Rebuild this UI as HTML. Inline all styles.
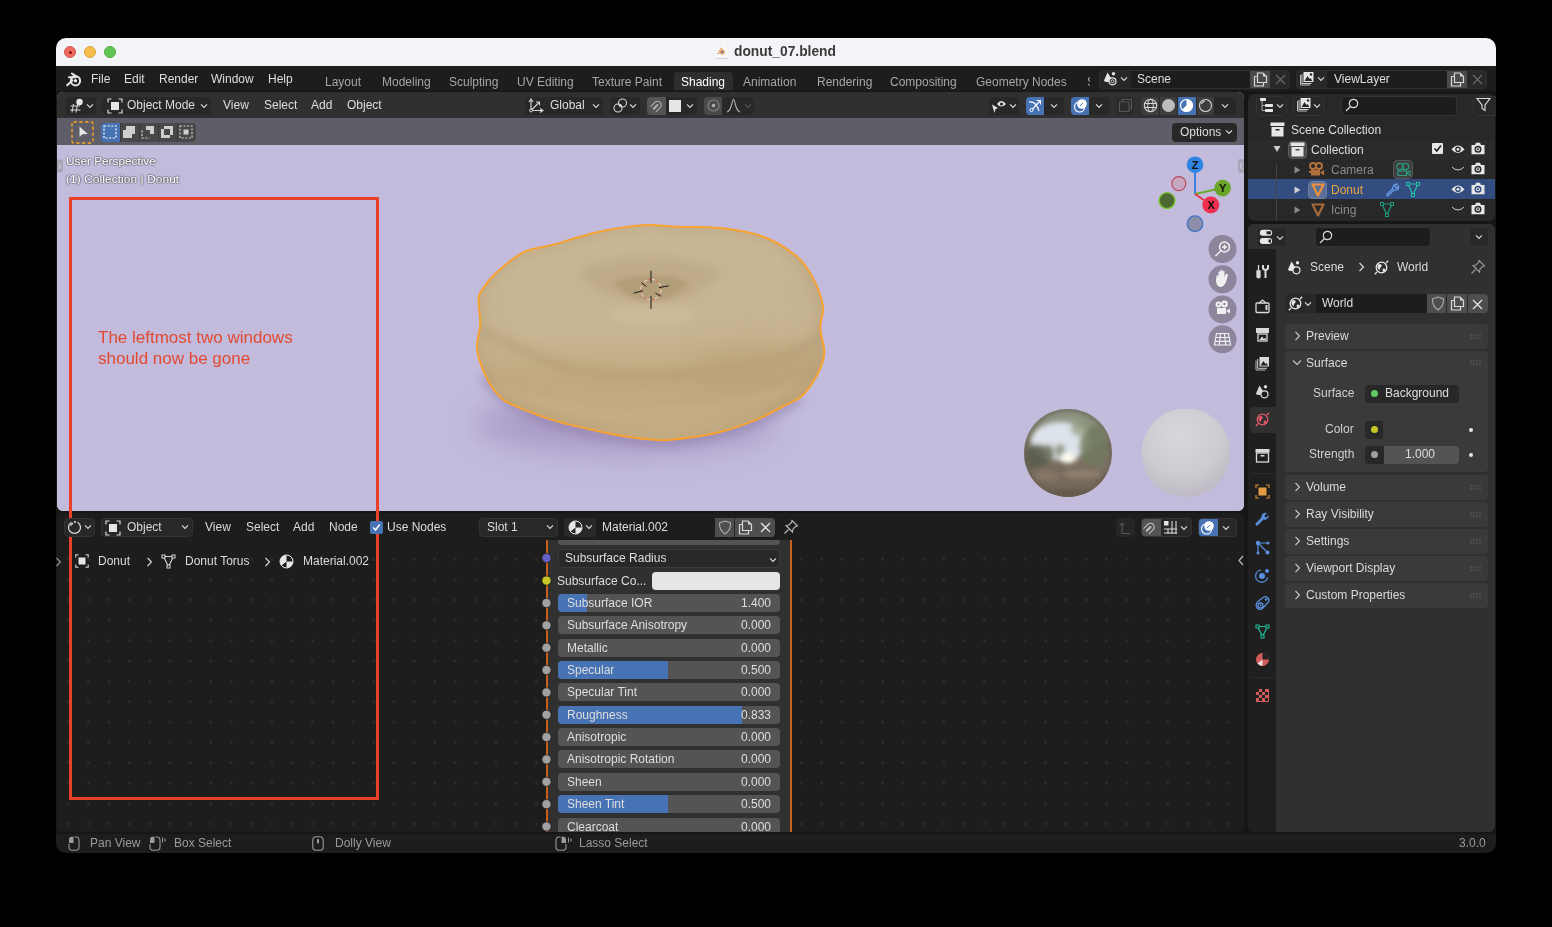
<!DOCTYPE html>
<html><head><meta charset="utf-8"><style>
*{box-sizing:border-box;margin:0;padding:0}
html,body{width:1552px;height:927px;background:#000;overflow:hidden;font-family:"Liberation Sans",sans-serif;font-size:12px;color:#d9d9d9}
#win{position:absolute;left:56px;top:38px;width:1440px;height:815px;border-radius:10px;overflow:hidden;background:#161616}
.a{position:absolute}
.t{position:absolute;white-space:nowrap;line-height:1;-webkit-font-smoothing:antialiased;will-change:transform}
svg{position:absolute;overflow:visible}
#pg{position:absolute;left:-56px;top:-38px;width:1552px;height:927px}

</style></head><body>
<div id="win"><div id="pg">
<!-- title bar -->
<div class="a" style="left:56px;top:38px;width:1440px;height:28px;background:#f2f4f7"></div>
<div class="a" style="left:64px;top:46px;width:12px;height:12px;border-radius:50%;background:#ec6a5e;border:0.5px solid #d65a4f"></div>
<div class="a" style="left:68.5px;top:50.5px;width:3px;height:3px;border-radius:50%;background:#8b1a10"></div>
<div class="a" style="left:84px;top:46px;width:12px;height:12px;border-radius:50%;background:#f4bf4f;border:0.5px solid #dca63d"></div>
<div class="a" style="left:104px;top:46px;width:12px;height:12px;border-radius:50%;background:#61c554;border:0.5px solid #52a843"></div>
<div class="a" style="left:715.5px;top:44.5px;width:12.5px;height:13.5px;background:#f7f7f7;border-radius:1.5px;box-shadow:0 0.5px 1px rgba(0,0,0,0.15)"></div>
<svg style="left:717px;top:47px" width="10" height="9" viewBox="0 0 10 9"><circle cx="5.2" cy="5" r="2.6" fill="#e8a060"/><circle cx="5.2" cy="5" r="1" fill="#4a6ab0"/><path d="M0.5 7 L3 5 M1.5 3.5 L5 3.5 M3 1 L5.5 2.5" stroke="#e8a060" stroke-width="1.2"/></svg>
<div class="t" style="left:734px;top:44.5px;font-size:13.8px;font-weight:bold;color:#3b3b3b">donut_07.blend</div>
<!-- top bar -->
<div class="a" style="left:56px;top:66px;width:1440px;height:25px;background:#1d1d1d"></div>
<!-- viewport area -->
<div class="a" style="left:57px;top:92px;width:1187px;height:419px;border-radius:6px;overflow:hidden;background:#c2bbdc">
  <svg style="left:0;top:53px" width="1187" height="366" viewBox="57 145 1187 366">
    <defs>
      <filter id="blur8" filterUnits="userSpaceOnUse" x="0" y="0" width="1552" height="927"><feGaussianBlur stdDeviation="14"/></filter>
      <filter id="blur4" filterUnits="userSpaceOnUse" x="0" y="0" width="1552" height="927"><feGaussianBlur stdDeviation="5"/></filter>
      <filter id="blur2" filterUnits="userSpaceOnUse" x="0" y="0" width="1552" height="927"><feGaussianBlur stdDeviation="2.5"/></filter>
      <linearGradient id="dg" x1="0" y1="0" x2="0" y2="1">
        <stop offset="0" stop-color="#c8b695"/>
        <stop offset="0.5" stop-color="#c8b592"/>
        <stop offset="0.72" stop-color="#c1a97f"/>
        <stop offset="1" stop-color="#c5ae86"/>
      </linearGradient>
      <radialGradient id="chrome" cx="0.45" cy="0.35" r="0.65">
        <stop offset="0" stop-color="#f4f4f0"/>
        <stop offset="0.3" stop-color="#c8cbc4"/>
        <stop offset="0.6" stop-color="#7a7d70"/>
        <stop offset="0.85" stop-color="#5a5548"/>
        <stop offset="1" stop-color="#3e3a32"/>
      </radialGradient>
      <radialGradient id="white" cx="0.45" cy="0.3" r="0.75">
        <stop offset="0" stop-color="#d6d7dc"/>
        <stop offset="0.6" stop-color="#cdcbd1"/>
        <stop offset="1" stop-color="#bbb6c1"/>
      </radialGradient>
      <clipPath id="dclip"><path id="dpath" d="M642.0 225.3 C655.6 224.4 665.4 226.2 678.5 226.7 C691.6 227.2 706.6 226.5 720.6 228.1 C734.6 229.7 750.1 231.8 762.7 236.5 C775.3 241.2 787.9 249.1 796.3 256.1 C804.7 263.1 808.8 270.2 813.2 278.6 C817.7 287.0 821.8 298.4 823.0 306.6 C824.2 314.8 820.0 320.3 820.2 328.0 C820.4 335.7 824.7 345.3 824.3 352.9 C823.9 360.5 821.4 366.4 817.8 373.5 C814.1 380.6 808.4 389.8 802.4 395.4 C796.4 401.0 789.5 402.9 781.8 407.0 C774.1 411.1 766.8 415.6 756.0 419.9 C745.2 424.2 731.9 429.5 717.3 432.8 C702.7 436.1 681.3 438.9 668.4 439.9 C655.5 440.8 650.5 439.7 640.0 438.5 C629.5 437.3 619.4 435.6 605.6 432.7 C591.8 429.8 572.5 426.0 557.1 421.4 C541.7 416.8 523.4 409.8 513.4 405.2 C503.4 400.6 502.0 399.3 497.2 393.9 C492.4 388.5 487.7 380.4 484.3 372.8 C480.9 365.2 477.7 356.6 477.0 348.5 C476.3 340.4 479.9 332.4 480.2 324.3 C480.5 316.2 478.3 305.8 478.6 300.0 C478.9 294.2 479.2 294.3 482.1 289.8 C485.0 285.3 489.1 279.3 496.1 273.0 C503.1 266.7 514.9 256.6 524.2 251.9 C533.6 247.2 540.1 248.2 552.2 244.9 C564.4 241.6 582.1 235.6 597.1 232.3 C612.1 229.0 628.4 226.2 642.0 225.3 Z"/></clipPath>
    </defs>
    <rect x="57" y="145" width="1187" height="366" fill="#c2bbdc"/>
    <ellipse cx="625" cy="424" rx="150" ry="30" fill="#a393c2" filter="url(#blur8)" opacity="0.75"/>
    <path d="M484 375 Q500 405 557 424 Q620 442 668 442 Q740 436 800 398" fill="none" stroke="#8f7fa8" stroke-width="10" filter="url(#blur4)" opacity="0.6"/>
    <g clip-path="url(#dclip)">
      <rect x="470" y="220" width="360" height="225" fill="url(#dg)"/>
      <path d="M478 300 Q470 360 500 400" fill="none" stroke="#b9a583" stroke-width="14" filter="url(#blur8)" opacity="0.3"/>
      <path d="M578 270 Q650 246 722 270 Q700 302 651 304 Q600 302 578 270 Z" fill="#b39f7b" filter="url(#blur4)" opacity="0.45"/>
      <path d="M612 282 Q651 268 690 282 Q675 300 651 301 Q627 300 612 282 Z" fill="#a8936d" filter="url(#blur2)" opacity="0.55"/>
      <ellipse cx="652" cy="314" rx="45" ry="9" fill="#cfbd9c" filter="url(#blur4)" opacity="0.7"/>
      <path d="M481 330 Q530 356 573 370 Q640 380 700 372 Q770 366 808 346 L824 335" fill="none" stroke="#b09870" stroke-width="7" filter="url(#blur4)" opacity="0.6"/>
      <ellipse cx="760" cy="370" rx="70" ry="28" fill="#b9a176" filter="url(#blur8)" opacity="0.55"/>
      <path d="M484 385 Q600 425 660 412 Q740 410 815 380" fill="none" stroke="#cbb48b" stroke-width="9" filter="url(#blur4)" opacity="0.4"/>
      <use href="#dpath" fill="none" stroke="#a8916c" stroke-width="8" filter="url(#blur4)" opacity="0.25"/>
      <path d="M808 262 Q838 330 808 400" fill="none" stroke="#ae976e" stroke-width="10" filter="url(#blur8)" opacity="0.4"/>
    </g>
    <use href="#dpath" fill="none" stroke="#f7a231" stroke-width="2"/>
    <!-- 3d cursor -->
    <circle cx="651" cy="289.5" r="10.2" fill="none" stroke="#e8e0d8" stroke-width="1" stroke-dasharray="4 4"/>
    <circle cx="651" cy="289.5" r="10.2" fill="none" stroke="#d86a50" stroke-width="1" stroke-dasharray="4 4" stroke-dashoffset="4"/>
    <path d="M651 270.7 L651 283 M651 296 L651 309 M633.6 293.2 L643 290.7 M659 287.6 L668.7 285.8 M641.5 282.8 L646.5 286.5 M655.5 293 L660.8 296.2" stroke="#1a1a1a" stroke-width="1"/>
    <!-- spheres -->
    <clipPath id="sclip"><circle cx="1068" cy="452.9" r="44"/></clipPath>
    <g clip-path="url(#sclip)">
      <rect x="1020" y="405" width="96" height="96" fill="#80776a"/>
      <ellipse cx="1068" cy="428" rx="46" ry="24" fill="#8f9684" filter="url(#blur2)"/>
      <ellipse cx="1061" cy="441" rx="30" ry="19" fill="#dde3ea" filter="url(#blur2)"/>
      <ellipse cx="1094" cy="447" rx="14" ry="22" fill="#6f785c" filter="url(#blur2)" opacity="0.85"/>
      <ellipse cx="1080" cy="428" rx="9" ry="8" fill="#8c9878" filter="url(#blur2)" opacity="0.7"/>
      <ellipse cx="1037" cy="458" rx="13" ry="13" fill="#5a5b4e" filter="url(#blur2)" opacity="0.9"/>
      <ellipse cx="1048" cy="453" rx="6" ry="8" fill="#6e735e" filter="url(#blur2)" opacity="0.8"/>
      <ellipse cx="1060" cy="451" rx="5" ry="7" fill="#7b8167" filter="url(#blur2)" opacity="0.7"/>
      <ellipse cx="1068" cy="486" rx="50" ry="23" fill="#776a5b" filter="url(#blur2)"/>
      <ellipse cx="1082" cy="474" rx="20" ry="5" fill="#978876" filter="url(#blur2)" opacity="0.7"/>
      <ellipse cx="1046" cy="476" rx="14" ry="6" fill="#8b7c69" filter="url(#blur2)" opacity="0.7"/>
      <ellipse cx="1068" cy="497" rx="40" ry="8" fill="#5f5447" filter="url(#blur2)" opacity="0.8"/>
      <ellipse cx="1068" cy="458" rx="8" ry="5" fill="#fffdf2" filter="url(#blur2)"/>
      <circle cx="1068" cy="452.9" r="44" fill="none" stroke="#665d50" stroke-width="5" filter="url(#blur2)" opacity="0.75"/>
    </g>
    <circle cx="1186" cy="452.8" r="44.3" fill="url(#white)"/>
    <!-- gizmo -->
    <path d="M1195 194 L1195 165" stroke="#3b82e0" stroke-width="2"/>
    <path d="M1195 194 L1222.5 188" stroke="#6aaa2a" stroke-width="2"/>
    <path d="M1195 194 L1211 205" stroke="#e8334d" stroke-width="2"/>
    <circle cx="1178.8" cy="183.6" r="7" fill="#c6a7c2" stroke="#b94a5a" stroke-width="1.2"/>
    <circle cx="1167" cy="200.6" r="8" fill="#4e6834" stroke="#7fc634" stroke-width="1.4"/>
    <circle cx="1195" cy="223.7" r="7.8" fill="#8d8ca9" stroke="#3e76c8" stroke-width="1.3"/>
    <circle cx="1195" cy="164.7" r="8.3" fill="#2f86e2"/>
    <circle cx="1222.6" cy="188.1" r="8.3" fill="#6aa52a"/>
    <circle cx="1210.8" cy="205.1" r="8.5" fill="#ee2f4f"/>
    <text x="1195" y="168.8" font-family="Liberation Sans" font-size="11" font-weight="bold" fill="#101010" text-anchor="middle">Z</text>
    <text x="1222.6" y="192.2" font-family="Liberation Sans" font-size="11" font-weight="bold" fill="#101010" text-anchor="middle">Y</text>
    <text x="1210.8" y="209.2" font-family="Liberation Sans" font-size="11" font-weight="bold" fill="#101010" text-anchor="middle">X</text>
    <!-- nav buttons -->
    <circle cx="1222.5" cy="249.1" r="14" fill="#8c859c"/>
    <circle cx="1222.5" cy="279.3" r="14" fill="#8c859c"/>
    <circle cx="1222.5" cy="309.4" r="14" fill="#8c859c"/>
    <circle cx="1222.5" cy="339.3" r="14" fill="#8c859c"/>
    <circle cx="1224.5" cy="247" r="5" fill="none" stroke="#f0f0f0" stroke-width="1.5"/>
    <path d="M1221 250.5 L1215.5 256 M1224.5 244.5 L1224.5 249.5 M1222 247 L1227 247" stroke="#f0f0f0" stroke-width="1.5"/>
    <path d="M1216 280 L1216.5 276 Q1217.5 274.5 1218.5 276 L1218.5 278 L1218.5 272 Q1219.5 270.5 1220.5 272 L1220.5 277 L1220.5 270.5 Q1221.5 269 1222.5 270.5 L1222.5 277 L1222.5 271.5 Q1223.5 270 1224.5 271.5 L1224.5 277.5 L1225.5 274.5 Q1227 273 1228 275 L1226 282 Q1224 287 1220 287 Q1216 286 1216 280 Z" fill="#f0f0f0"/>
    <circle cx="1218.5" cy="304.5" r="3" fill="#f0f0f0"/><circle cx="1224.5" cy="304" r="3.4" fill="#f0f0f0"/>
    <circle cx="1218.5" cy="304.5" r="1" fill="#8c859c"/><circle cx="1224.5" cy="304" r="1.2" fill="#8c859c"/>
    <rect x="1217" y="308" width="9" height="6" fill="#f0f0f0"/><path d="M1226 311 L1230 308.5 L1230 313.5 Z" fill="#f0f0f0"/>
    <path d="M1216.5 333.5 L1228.5 333.5 L1230.5 345 L1214.5 345 Z M1215.5 337.5 L1229.5 337.5 M1215 341.3 L1230 341.3 M1220.5 333.5 L1219.2 345 M1224.5 333.5 L1225.8 345" fill="none" stroke="#f0f0f0" stroke-width="1.2"/>
    <!-- side tabs -->
    <rect x="55" y="159.5" width="8" height="13" rx="2" fill="#a9a3b6"/><path d="M58.5 163 L61 166 L58.5 169" fill="none" stroke="#d8d4e0" stroke-width="1"/>
    <rect x="1238" y="159" width="9" height="14" rx="2" fill="#aaa4b8"/><path d="M1242.5 163 L1240 166 L1242.5 169" fill="none" stroke="#d8d4e0" stroke-width="1"/>
  </svg>
  <div class="a" style="left:0;top:0;width:1187px;height:26px;background:#303030"></div>
  <div class="a" style="left:0;top:26px;width:1187px;height:27px;background:#5f5d68"></div>
</div>
<!-- node editor area -->
<div class="a" style="left:57px;top:513px;width:1187px;height:318.5px;border-radius:6px;overflow:hidden;background-color:#1d1d1d;background-image:radial-gradient(circle at 10.185px 10.185px,#2a2a2a 0,#2a2a2a 1.4px,transparent 1.8px);background-size:20.37px 20.37px;background-position:1.05px -4.7px">
  <div class="a" style="left:0;top:0;width:1187px;height:27px;background:#1d1d1d"></div>
</div>
<!-- outliner -->
<div class="a" style="left:1248px;top:93.5px;width:247px;height:127px;border-radius:6px;overflow:hidden;background:#282828"></div>
<!-- properties -->
<div class="a" style="left:1248px;top:224px;width:247px;height:607.5px;border-radius:6px;overflow:hidden;background:#303030">
  <div class="a" style="left:0;top:0;width:247px;height:25px;background:#303030"></div>
  <div class="a" style="left:0;top:25px;width:28px;height:583px;background:#1f1f1f"></div>
</div>
<!-- status bar -->
<div class="a" style="left:56px;top:833.5px;width:1440px;height:20px;background:#1d1d1d"></div>
<!-- blender logo -->
<svg style="left:66px;top:72px" width="16" height="15" viewBox="0 0 16 15">
  <circle cx="9.5" cy="8.8" r="4.6" fill="none" stroke="#e6e6e6" stroke-width="2"/>
  <circle cx="9.5" cy="8.8" r="1.7" fill="#e6e6e6"/>
  <path d="M1.2 13.2 L6.5 8.2 M3 5.2 L9.5 5.2 M6 1.6 L10.5 4.6" stroke="#e6e6e6" stroke-width="2" stroke-linecap="round" fill="none"/>
</svg>
<div class="t" style="left:91px;top:73px;color:#dedede">File</div>
<div class="t" style="left:124px;top:73px;color:#dedede">Edit</div>
<div class="t" style="left:159px;top:73px;color:#dedede">Render</div>
<div class="t" style="left:211px;top:73px;color:#dedede">Window</div>
<div class="t" style="left:268px;top:73px;color:#dedede">Help</div>
<!-- workspace tabs -->
<div class="a" style="left:674px;top:72px;width:59px;height:18px;border-radius:4px 4px 0 0;background:#2e2e2e"></div>
<div class="t" style="left:325px;top:76px;color:#a6a6a6">Layout</div>
<div class="t" style="left:382px;top:76px;color:#a6a6a6">Modeling</div>
<div class="t" style="left:449px;top:76px;color:#a6a6a6">Sculpting</div>
<div class="t" style="left:517px;top:76px;color:#a6a6a6">UV Editing</div>
<div class="t" style="left:592px;top:76px;color:#a6a6a6">Texture Paint</div>
<div class="t" style="left:681px;top:76px;color:#ffffff">Shading</div>
<div class="t" style="left:743px;top:76px;color:#a6a6a6">Animation</div>
<div class="t" style="left:817px;top:76px;color:#a6a6a6">Rendering</div>
<div class="t" style="left:890px;top:76px;color:#a6a6a6">Compositing</div>
<div class="t" style="left:976px;top:76px;color:#a6a6a6">Geometry Nodes</div>
<div class="a" style="left:1087px;top:76px;width:3px;height:11px;overflow:hidden"><div class="t" style="left:0;top:0;color:#a6a6a6">S</div></div>
<!-- scene selector -->
<div class="a" style="left:1099px;top:69.5px;width:191px;height:19.5px;border-radius:4px;background:#282828;border:1px solid #2f2f2f;overflow:hidden">
  <div class="a" style="left:31px;top:0;width:119px;height:18px;background:#1d1d1d"></div>
  <div class="a" style="left:150px;top:0;width:20px;height:18px;background:#4a4a4a"></div>
</div>
<svg style="left:1103px;top:71px" width="16" height="16" viewBox="0 0 16 16">
  <path d="M4.5 1.5 L1 9.5 Q1.5 11 4 11 L6 11 Q6 8 8 7 Z" fill="#e6e6e6"/>
  <circle cx="10.5" cy="2.7" r="1.7" fill="#e6e6e6"/>
  <circle cx="9.5" cy="10.3" r="3.5" fill="#282828" stroke="#e6e6e6" stroke-width="1.2"/>
  <circle cx="9.5" cy="10.3" r="1.5" fill="none" stroke="#e6e6e6" stroke-width="0.9"/>
</svg>
<svg style="left:1120px;top:76px" width="8" height="6" viewBox="0 0 8 6"><path d="M1 1.3 L4 4.3 L7 1.3" stroke="#d9d9d9" stroke-width="1.2" fill="none"/></svg>
<div class="t" style="left:1137px;top:73px;color:#dedede">Scene</div>
<svg style="left:1252.5px;top:71.5px" width="15" height="15" viewBox="0 0 15 15"><path d="M4.5 4 L4.5 1 L10 1 L13.5 4.5 L13.5 10.5 L10.5 10.5" stroke="#d9d9d9" stroke-width="1.2" fill="none"/><path d="M10 1 L13.5 4.5 L10 4.5 Z" fill="#d9d9d9"/><path d="M1.5 4.5 L1.5 14 L10.5 14 L10.5 10.5 M1.5 4.5 L4.5 4.5 M4.5 4.5 L4.5 10.5 L10.5 10.5" stroke="#d9d9d9" stroke-width="1.2" fill="none"/></svg>
<svg style="left:1275px;top:74px" width="11" height="11" viewBox="0 0 11 11"><path d="M1 1 L10 10 M10 1 L1 10" stroke="#6b6b6b" stroke-width="1.1"/></svg>
<!-- view layer selector -->
<div class="a" style="left:1296px;top:69.5px;width:191px;height:19.5px;border-radius:4px;background:#282828;border:1px solid #2f2f2f;overflow:hidden">
  <div class="a" style="left:30px;top:0;width:120px;height:18px;background:#1d1d1d"></div>
  <div class="a" style="left:150px;top:0;width:20px;height:18px;background:#4a4a4a"></div>
</div>
<svg style="left:1299px;top:71px" width="16" height="16" viewBox="0 0 16 16">
  <path d="M1.5 4 L1.5 14 L11 14" stroke="#bdbdbd" stroke-width="1" fill="none"/>
  <path d="M3 3 L3 12.5 L12.5 12.5" stroke="#d0d0d0" stroke-width="1" fill="none"/>
  <rect x="4.5" y="1" width="10" height="10" fill="#e6e6e6"/>
  <path d="M5.5 10 L8.5 5 L10.5 8 L11.5 7 L13.5 10 Z" fill="#282828"/>
  <circle cx="12" cy="3.5" r="1.2" fill="#282828"/>
</svg>
<svg style="left:1317px;top:76px" width="8" height="6" viewBox="0 0 8 6"><path d="M1 1.3 L4 4.3 L7 1.3" stroke="#d9d9d9" stroke-width="1.2" fill="none"/></svg>
<div class="t" style="left:1334px;top:73px;color:#dedede">ViewLayer</div>
<svg style="left:1449.5px;top:71.5px" width="15" height="15" viewBox="0 0 15 15"><path d="M4.5 4 L4.5 1 L10 1 L13.5 4.5 L13.5 10.5 L10.5 10.5" stroke="#d9d9d9" stroke-width="1.2" fill="none"/><path d="M10 1 L13.5 4.5 L10 4.5 Z" fill="#d9d9d9"/><path d="M1.5 4.5 L1.5 14 L10.5 14 L10.5 10.5 M1.5 4.5 L4.5 4.5 M4.5 4.5 L4.5 10.5 L10.5 10.5" stroke="#d9d9d9" stroke-width="1.2" fill="none"/></svg>
<svg style="left:1472px;top:74px" width="11" height="11" viewBox="0 0 11 11"><path d="M1 1 L10 10 M10 1 L1 10" stroke="#6b6b6b" stroke-width="1.1"/></svg>
<!-- viewport header widgets -->
<div class="a" style="left:65.5px;top:96.5px;width:30px;height:18px;border-radius:4px;background:#282828"></div>
<svg style="left:69px;top:98px" width="16" height="15" viewBox="0 0 16 15">
  <path d="M1.5 8 L11 8 M1 12 L11.5 12 M4.5 6 L3 14.5 M8.5 6 L7 14.5" stroke="#cfcfcf" stroke-width="1.1" fill="none"/>
  <circle cx="10.5" cy="4" r="3.2" fill="#e6e6e6"/>
</svg>
<svg style="left:86px;top:103px" width="8" height="6" viewBox="0 0 8 6"><path d="M1 1.3 L4 4.3 L7 1.3" stroke="#d9d9d9" stroke-width="1.2" fill="none"/></svg>
<div class="a" style="left:102px;top:96.5px;width:108.5px;height:18px;border-radius:4px;background:#282828"></div>
<svg style="left:107px;top:97.5px" width="16" height="16" viewBox="0 0 16 16">
  <path d="M1 4.5 L1 1 L4.5 1 M11.5 1 L15 1 L15 4.5 M15 11.5 L15 15 L11.5 15 M4.5 15 L1 15 L1 11.5" stroke="#d9d9d9" stroke-width="1.2" fill="none"/>
  <rect x="4" y="4" width="8" height="8" fill="#e6e6e6"/>
</svg>
<div class="t" style="left:127px;top:99px;color:#dedede">Object Mode</div>
<svg style="left:200px;top:103px" width="8" height="6" viewBox="0 0 8 6"><path d="M1 1.3 L4 4.3 L7 1.3" stroke="#d9d9d9" stroke-width="1.2" fill="none"/></svg>
<div class="t" style="left:223px;top:99px;color:#dedede">View</div>
<div class="t" style="left:264px;top:99px;color:#dedede">Select</div>
<div class="t" style="left:311px;top:99px;color:#dedede">Add</div>
<div class="t" style="left:347px;top:99px;color:#dedede">Object</div>

<!-- transform orientation -->
<div class="a" style="left:525px;top:96.5px;width:78px;height:18px;border-radius:4px;background:#282828"></div>
<svg style="left:529px;top:98px" width="15" height="15" viewBox="0 0 15 15">
  <path d="M2 2 L2 12.5 L13.5 12.5 M2 12.5 L10 4.5" stroke="#d9d9d9" stroke-width="1.1" fill="none"/>
  <path d="M0 4 L2 1 L4 4 M11 10.5 L14 12.5 L11 14.5 M7 4 L10.5 4 L10.5 7.5" stroke="#d9d9d9" stroke-width="1.1" fill="none"/>
  <circle cx="2" cy="12.5" r="1.4" fill="#282828" stroke="#d9d9d9" stroke-width="1"/>
</svg>
<div class="t" style="left:550px;top:99px;color:#dedede">Global</div>
<svg style="left:592px;top:103px" width="8" height="6" viewBox="0 0 8 6"><path d="M1 1.3 L4 4.3 L7 1.3" stroke="#d9d9d9" stroke-width="1.2" fill="none"/></svg>
<div class="a" style="left:610px;top:96.5px;width:30px;height:18px;border-radius:4px;background:#282828"></div>
<svg style="left:613px;top:98px" width="15" height="15" viewBox="0 0 15 15">
  <circle cx="9.5" cy="5" r="4" fill="none" stroke="#d9d9d9" stroke-width="1.1"/>
  <circle cx="5" cy="10" r="4" fill="none" stroke="#d9d9d9" stroke-width="1.1"/>
  <circle cx="7.3" cy="7.5" r="1.2" fill="#e6e6e6"/>
</svg>
<svg style="left:629px;top:103px" width="8" height="6" viewBox="0 0 8 6"><path d="M1 1.3 L4 4.3 L7 1.3" stroke="#d9d9d9" stroke-width="1.2" fill="none"/></svg>
<!-- snap -->
<div class="a" style="left:647px;top:96.5px;width:50px;height:18px;border-radius:4px;background:#282828;overflow:hidden"><div class="a" style="left:0;top:0;width:19px;height:18px;background:#545454"></div></div>
<svg style="left:649px;top:98px" width="15" height="15" viewBox="0 0 15 15"><path d="M2.5 10 L7 5.5 A2.12 2.12 0 0 1 10 8.5 L5.5 13" fill="none" stroke="#b0b0b0" stroke-width="4.4"/><path d="M2.5 10 L7 5.5 A2.12 2.12 0 0 1 10 8.5 L5.5 13" fill="none" stroke="#545454" stroke-width="2.2"/><path d="M1.5 9 L3.5 11 M4.5 12 L6.5 14" stroke="#545454" stroke-width="1.2"/></svg>
<div class="a" style="left:669px;top:99.5px;width:12px;height:12px;background:#e6e6e6"></div>
<svg style="left:686px;top:103px" width="8" height="6" viewBox="0 0 8 6"><path d="M1 1.3 L4 4.3 L7 1.3" stroke="#d9d9d9" stroke-width="1.2" fill="none"/></svg>
<!-- proportional -->
<div class="a" style="left:704px;top:96.5px;width:50px;height:18px;border-radius:4px;background:#282828;overflow:hidden"><div class="a" style="left:0;top:0;width:18px;height:18px;background:#4a4a4a"></div></div>
<svg style="left:705.5px;top:98px" width="15" height="15" viewBox="0 0 15 15"><circle cx="7.5" cy="7.5" r="5.5" fill="none" stroke="#8a8a8a" stroke-width="1.1"/><circle cx="7.5" cy="7.5" r="1.8" fill="#b0b0b0"/></svg>
<svg style="left:726px;top:98px" width="15" height="15" viewBox="0 0 15 15"><path d="M1 14 Q4 13 5.5 7 Q7 1 7.5 1 Q8 1 9.5 7 Q11 13 14 14" fill="none" stroke="#b0b0b0" stroke-width="1.1"/></svg>
<svg style="left:744px;top:103px" width="8" height="6" viewBox="0 0 8 6"><path d="M1 1.3 L4 4.3 L7 1.3" stroke="#555" stroke-width="1.2" fill="none"/></svg>

<!-- right header -->
<div class="a" style="left:989px;top:96.5px;width:30px;height:18px;border-radius:4px;background:#282828"></div>
<svg style="left:991px;top:97.5px" width="16" height="16" viewBox="0 0 16 16">
  <path d="M6 6 Q10 0 15 6 Q10 11 6 6 Z" fill="#e6e6e6"/><circle cx="10.5" cy="6" r="1.6" fill="#282828"/>
  <path d="M1 6.5 L7 10 L4.5 11 L3.5 15 Z" fill="#e6e6e6"/>
</svg>
<svg style="left:1009px;top:103px" width="8" height="6" viewBox="0 0 8 6"><path d="M1 1.3 L4 4.3 L7 1.3" stroke="#d9d9d9" stroke-width="1.2" fill="none"/></svg>
<div class="a" style="left:1026px;top:96.5px;width:38px;height:18px;border-radius:4px;background:#282828;overflow:hidden"><div class="a" style="left:0;top:0;width:18px;height:18px;background:#4772b3"></div></div>
<svg style="left:1028px;top:98px" width="15" height="15" viewBox="0 0 15 15">
  <path d="M1 4 Q8 3 11 13" fill="none" stroke="#fff" stroke-width="1.1"/>
  <path d="M4 11.5 L12.5 2.5 M8.5 2.5 L12.5 2.5 L12.5 6.5" fill="none" stroke="#fff" stroke-width="1.1"/>
  <circle cx="3.5" cy="12" r="1.6" fill="#4772b3" stroke="#fff" stroke-width="1"/>
</svg>
<svg style="left:1050px;top:103px" width="8" height="6" viewBox="0 0 8 6"><path d="M1 1.3 L4 4.3 L7 1.3" stroke="#d9d9d9" stroke-width="1.2" fill="none"/></svg>
<div class="a" style="left:1071px;top:96.5px;width:38px;height:18px;border-radius:4px;background:#282828;overflow:hidden"><div class="a" style="left:0;top:0;width:18px;height:18px;background:#4772b3"></div></div>
<svg style="left:1073px;top:98px" width="15" height="15" viewBox="0 0 15 15">
  <path d="M6 4 A5 5 0 1 0 11.5 10" fill="none" stroke="#fff" stroke-width="1.1"/>
  <circle cx="9" cy="6" r="4.8" fill="#fff"/>
  <path d="M7 8 L10 5" stroke="#4772b3" stroke-width="1"/>
</svg>
<svg style="left:1095px;top:103px" width="8" height="6" viewBox="0 0 8 6"><path d="M1 1.3 L4 4.3 L7 1.3" stroke="#d9d9d9" stroke-width="1.2" fill="none"/></svg>
<div class="a" style="left:1116px;top:96.5px;width:18px;height:18px;border-radius:4px;background:#2b2b2b"></div>
<svg style="left:1118px;top:98px" width="15" height="15" viewBox="0 0 15 15"><path d="M4 4 L4 1.5 L13.5 1.5 L13.5 11 L11 11 M1.5 4 L11 4 L11 13.5 L1.5 13.5 Z" fill="none" stroke="#555" stroke-width="1.1"/></svg>
<div class="a" style="left:1141px;top:96.5px;width:95px;height:18px;border-radius:4px;background:#282828;overflow:hidden">
  <div class="a" style="left:0;top:0;width:18px;height:18px;background:#3d3d3d"></div>
  <div class="a" style="left:19px;top:0;width:17px;height:18px;background:#3d3d3d"></div>
  <div class="a" style="left:37px;top:0;width:18px;height:18px;background:#4772b3"></div>
  <div class="a" style="left:56px;top:0;width:17px;height:18px;background:#3d3d3d"></div>
</div>
<svg style="left:1143px;top:98px" width="15" height="15" viewBox="0 0 15 15"><circle cx="7.5" cy="7.5" r="6.2" fill="none" stroke="#d9d9d9" stroke-width="1.1"/><ellipse cx="7.5" cy="7.5" rx="2.8" ry="6.2" fill="none" stroke="#d9d9d9" stroke-width="1"/><path d="M1.3 5.5 L13.7 5.5 M1.3 9.5 L13.7 9.5" stroke="#d9d9d9" stroke-width="1"/></svg>
<svg style="left:1161px;top:98px" width="15" height="15" viewBox="0 0 15 15"><circle cx="7.5" cy="7.5" r="6.5" fill="#bdbdbd"/></svg>
<svg style="left:1179px;top:98px" width="15" height="15" viewBox="0 0 15 15"><circle cx="7.5" cy="7.5" r="6" fill="none" stroke="#fff" stroke-width="1.2"/><path d="M7.5 1.5 L7.5 7.5 L13.5 7.5 A6 6 0 0 0 7.5 1.5 Z M7.5 7.5 L3 11.5 A6 6 0 0 0 13.5 7.5 Z" fill="#fff"/></svg>
<svg style="left:1198px;top:98px" width="15" height="15" viewBox="0 0 15 15"><circle cx="7.5" cy="7.5" r="6" fill="none" stroke="#cfcfcf" stroke-width="1.1"/><path d="M3.5 6 Q4.5 3.5 7 3" fill="none" stroke="#cfcfcf" stroke-width="1.1"/></svg>
<svg style="left:1221px;top:103px" width="8" height="6" viewBox="0 0 8 6"><path d="M1 1.3 L4 4.3 L7 1.3" stroke="#d9d9d9" stroke-width="1.2" fill="none"/></svg>

<!-- tool header -->
<svg style="left:70.5px;top:120.5px" width="23" height="23" viewBox="0 0 23 23"><rect x="1" y="1" width="21" height="21" rx="1.5" fill="none" stroke="#f5a623" stroke-width="1.4" stroke-dasharray="3.4 2.4"/></svg>
<svg style="left:78px;top:126px" width="11" height="12" viewBox="0 0 11 12"><path d="M1.5 0.5 L1.5 11 L4.3 8.3 L9.8 8.1 Z" fill="#e6e6e6"/></svg>
<div class="a" style="left:100.5px;top:122.5px;width:95px;height:19px;border-radius:4px;background:#484848;overflow:hidden">
  <div class="a" style="left:0;top:0;width:19px;height:19px;background:#4772b3"></div>
  <div class="a" style="left:19px;top:0;width:1px;height:19px;background:#3a3a3a"></div>
  <div class="a" style="left:38px;top:0;width:1px;height:19px;background:#3a3a3a"></div>
  <div class="a" style="left:57px;top:0;width:1px;height:19px;background:#3a3a3a"></div>
  <div class="a" style="left:76px;top:0;width:1px;height:19px;background:#3a3a3a"></div>
</div>
<svg style="left:103px;top:125px" width="14" height="14" viewBox="0 0 14 14"><rect x="1" y="1" width="12" height="12" fill="none" stroke="#fff" stroke-width="1.2" stroke-dasharray="2 1.6"/></svg>
<svg style="left:122px;top:125px" width="14" height="14" viewBox="0 0 14 14"><path d="M4 1 L13 1 L13 9 L10 9 L10 13 L1 13 L1 5 L4 5 Z" fill="#cfcfcf"/></svg>
<svg style="left:141px;top:125px" width="14" height="14" viewBox="0 0 14 14"><path d="M5 1 L13 1 L13 9 L9 9 L9 5 L5 5 Z" fill="#cfcfcf"/><path d="M1 5.5 L1 13 L8.5 13" fill="none" stroke="#cfcfcf" stroke-width="1.2" stroke-dasharray="2 1.6"/></svg>
<svg style="left:160px;top:125px" width="14" height="14" viewBox="0 0 14 14"><path d="M1 4 L10 4 L10 13 L1 13 Z M4 1 L13 1 L13 10 L10 10 L10 4 L4 4 Z" fill="#cfcfcf" fill-rule="evenodd"/><rect x="4" y="4" width="6" height="6" fill="#484848"/></svg>
<svg style="left:179px;top:125px" width="14" height="14" viewBox="0 0 14 14"><rect x="1" y="1" width="12" height="12" fill="none" stroke="#cfcfcf" stroke-width="1.2" stroke-dasharray="2 1.6"/><rect x="4.5" y="4.5" width="5" height="5" fill="#cfcfcf"/></svg>
<div class="a" style="left:1172px;top:122.5px;width:65px;height:19px;border-radius:4px;background:#282828"></div>
<div class="t" style="left:1180px;top:126px;color:#dedede">Options</div>
<svg style="left:1225px;top:129px" width="8" height="6" viewBox="0 0 8 6"><path d="M1 1.3 L4 4.3 L7 1.3" stroke="#d9d9d9" stroke-width="1.2" fill="none"/></svg>
<div class="t" style="left:66px;top:155.5px;font-size:11.8px;color:#fff;-webkit-text-stroke:0.2px #fff;text-shadow:0 0 1.5px #000,0 0 1.5px #000">User Perspective</div>
<div class="t" style="left:66px;top:173.5px;font-size:11.8px;color:#fff;letter-spacing:0.12px;-webkit-text-stroke:0.2px #fff;text-shadow:0 0 1.5px #000,0 0 1.5px #000">(1) Collection | Donut</div>
<div class="a" style="left:69px;top:196.5px;width:309.5px;height:603px;border:3px solid #e8402a"></div>
<div class="t" style="left:98px;top:327.5px;font-size:17px;color:#e34a32;line-height:20.6px">The leftmost two windows<br>should now be gone</div>
<!-- outliner header -->
<div class="a" style="left:1256px;top:95.5px;width:31px;height:20px;border-radius:4px;background:#282828;border:1px solid #333"></div>
<svg style="left:1259px;top:97px" width="16" height="16" viewBox="0 0 16 16">
  <rect x="1" y="1" width="6" height="3" rx="0.8" fill="#e6e6e6"/>
  <rect x="6" y="7" width="8" height="3" rx="0.8" fill="#e6e6e6"/>
  <rect x="6" y="12" width="8" height="3" rx="0.8" fill="#e6e6e6"/>
  <path d="M3 4 L3 13.5 L6 13.5 M3 8.5 L6 8.5" stroke="#aaa" stroke-width="1" fill="none"/>
</svg>
<svg style="left:1276px;top:103px" width="8" height="6" viewBox="0 0 8 6"><path d="M1 1.3 L4 4.3 L7 1.3" stroke="#d9d9d9" stroke-width="1.2" fill="none"/></svg>
<div class="a" style="left:1293px;top:95.5px;width:31px;height:20px;border-radius:4px;background:#282828;border:1px solid #333"></div>
<svg style="left:1296px;top:97px" width="16" height="16" viewBox="0 0 16 16">
  <path d="M1.5 4 L1.5 14 L11 14" stroke="#bdbdbd" stroke-width="1" fill="none"/>
  <path d="M3 3 L3 12.5 L12.5 12.5" stroke="#d0d0d0" stroke-width="1" fill="none"/>
  <rect x="4.5" y="1" width="10" height="10" fill="#e6e6e6"/>
  <path d="M5.5 10 L8.5 5 L10.5 8 L11.5 7 L13.5 10 Z" fill="#282828"/>
  <circle cx="12" cy="3.5" r="1.2" fill="#282828"/>
</svg>
<svg style="left:1313px;top:103px" width="8" height="6" viewBox="0 0 8 6"><path d="M1 1.3 L4 4.3 L7 1.3" stroke="#d9d9d9" stroke-width="1.2" fill="none"/></svg>
<div class="a" style="left:1341px;top:95.5px;width:116px;height:20px;border-radius:4px;background:#1d1d1d;border:1px solid #333"></div>
<svg style="left:1345px;top:98px" width="14" height="14" viewBox="0 0 14 14"><circle cx="8.5" cy="5.5" r="4.2" fill="none" stroke="#d9d9d9" stroke-width="1.2"/><path d="M5.5 8.5 L1 13" stroke="#d9d9d9" stroke-width="1.3"/></svg>
<div class="a" style="left:1473px;top:95.5px;width:30px;height:20px;border-radius:4px;background:#282828;border:1px solid #333"></div>
<svg style="left:1476px;top:97px" width="15" height="15" viewBox="0 0 15 15"><path d="M1 1.5 L14 1.5 L9 8 L9 13.5 L6 11.5 L6 8 Z" fill="none" stroke="#d9d9d9" stroke-width="1.2"/></svg>
<!-- rows -->
<div class="a" style="left:1248px;top:139.5px;width:247px;height:20px;background:#2b2b2b"></div>
<div class="a" style="left:1248px;top:179px;width:247px;height:20px;background:#334d80"></div>
<div class="a" style="left:1275.5px;top:164px;width:1px;height:57px;background:#444"></div>
<!-- scene collection -->
<svg style="left:1270px;top:122px" width="15" height="15" viewBox="0 0 15 15"><rect x="0.5" y="0.5" width="14" height="3.5" fill="#e6e6e6"/><rect x="1.5" y="5" width="12" height="9.5" fill="#e6e6e6"/><rect x="5.5" y="7" width="4" height="1.5" fill="#282828"/></svg>
<div class="t" style="left:1291px;top:124px;color:#dedede">Scene Collection</div>
<!-- collection -->
<svg style="left:1273px;top:145px" width="8" height="8" viewBox="0 0 8 8"><path d="M0.5 1 L7.5 1 L4 7 Z" fill="#ccc"/></svg>
<div class="a" style="left:1288px;top:140.5px;width:19px;height:18px;border-radius:4px;background:#4a4a4a;border:1px solid #5a5a5a"></div>
<svg style="left:1290px;top:142px" width="15" height="15" viewBox="0 0 15 15"><rect x="0.5" y="0.5" width="14" height="3.5" fill="#e6e6e6"/><rect x="1.5" y="5" width="12" height="9.5" fill="#e6e6e6"/><rect x="5.5" y="7" width="4" height="1.5" fill="#4a4a4a"/></svg>
<div class="t" style="left:1311px;top:144px;color:#dedede">Collection</div>
<svg style="left:1432px;top:143px" width="12" height="12" viewBox="0 0 12 12"><rect x="0" y="0" width="11" height="11" rx="1" fill="#e6e6e6"/><path d="M2.5 5.5 L4.8 8 L9 2.5" stroke="#1d1d1d" stroke-width="1.6" fill="none"/></svg>
<svg style="left:1451px;top:144px" width="14" height="11" viewBox="0 0 14 11"><path d="M0.5 5.5 Q7 -2.5 13.5 5.5 Q7 12.5 0.5 5.5 Z" fill="#e6e6e6"/><circle cx="7" cy="5.3" r="2.8" fill="#2b2b2b"/><circle cx="7" cy="5.3" r="1.4" fill="#e6e6e6"/></svg>
<!-- camera row -->
<svg style="left:1294px;top:165.5px" width="7" height="8" viewBox="0 0 7 8"><path d="M0.5 0.5 L6.5 4 L0.5 7.5 Z" fill="#888"/></svg>
<svg style="left:1309px;top:162px" width="16" height="15" viewBox="0 0 16 15"><circle cx="4" cy="4" r="3" fill="none" stroke="#b0703c" stroke-width="2"/><circle cx="10" cy="4" r="3" fill="none" stroke="#b0703c" stroke-width="2"/><rect x="2" y="8" width="9" height="5.5" fill="#b0703c"/><path d="M11 10.5 L15 8 L15 13.5 Z" fill="#b0703c"/><rect x="0" y="9" width="2.5" height="2" fill="#b0703c"/></svg>
<div class="t" style="left:1331px;top:164px;color:#8a8a8a">Camera</div>
<div class="a" style="left:1393px;top:160px;width:20px;height:19px;border-radius:4px;background:#3e3e3e;border:1px solid #555"></div>
<svg style="left:1395px;top:162px" width="16" height="15" viewBox="0 0 16 15"><circle cx="5" cy="4.5" r="3.2" fill="none" stroke="#2a9a80" stroke-width="1.2"/><circle cx="10.5" cy="4.5" r="3.2" fill="none" stroke="#2a9a80" stroke-width="1.2"/><rect x="3" y="9" width="8.5" height="4.5" fill="none" stroke="#2a9a80" stroke-width="1.2"/><path d="M11.5 11 L15 9 L15 13.5 Z" fill="none" stroke="#2a9a80" stroke-width="1.1"/></svg>
<!-- donut row -->
<svg style="left:1294px;top:185.5px" width="7" height="8" viewBox="0 0 7 8"><path d="M0.5 0.5 L6.5 4 L0.5 7.5 Z" fill="#d0d0d0"/></svg>
<div class="a" style="left:1308px;top:180.5px;width:19px;height:18px;border-radius:4px;background:#5c6f94;border:1px solid #6b7ea3"></div>
<svg style="left:1310.5px;top:182.5px" width="14" height="14" viewBox="0 0 14 14"><path d="M1.5 1.5 L12.5 1.5 L7 12.5 Z" fill="none" stroke="#f0923a" stroke-width="2.2" stroke-linejoin="round"/></svg>
<div class="t" style="left:1331px;top:184px;color:#e9a63a">Donut</div>
<svg style="left:1386px;top:182.5px" width="14" height="14" viewBox="0 0 14 14"><path d="M12.5 3 Q13 6 10.5 7 Q9 7.5 8 7 L2.5 12.5 Q1.5 13.3 0.8 12.5 Q0.3 11.8 1.2 11 L6.8 5.8 Q6.3 4 7.5 2.5 Q9 0.8 11 1.2 L8.8 3.4 L9.5 4.8 L10.8 5.2 Z" fill="none" stroke="#6a9ce8" stroke-width="1.2"/></svg>
<svg style="left:1406px;top:182px" width="14" height="15" viewBox="0 0 14 15"><path d="M2 2 L12 2 L7 13 Z" fill="none" stroke="#22c0a0" stroke-width="1.2"/><rect x="0.5" y="0.5" width="3" height="3" fill="#334d80" stroke="#22c0a0" stroke-width="1"/><rect x="10.5" y="0.5" width="3" height="3" fill="#334d80" stroke="#22c0a0" stroke-width="1"/><rect x="5.5" y="11.5" width="3" height="3" fill="#334d80" stroke="#22c0a0" stroke-width="1"/></svg>
<svg style="left:1451px;top:184px" width="14" height="11" viewBox="0 0 14 11"><path d="M0.5 5.5 Q7 -2.5 13.5 5.5 Q7 12.5 0.5 5.5 Z" fill="#e6e6e6"/><circle cx="7" cy="5.3" r="2.8" fill="#334d80"/><circle cx="7" cy="5.3" r="1.4" fill="#e6e6e6"/></svg>
<!-- icing row -->
<svg style="left:1294px;top:205.5px" width="7" height="8" viewBox="0 0 7 8"><path d="M0.5 0.5 L6.5 4 L0.5 7.5 Z" fill="#888"/></svg>
<svg style="left:1310.5px;top:202.5px" width="14" height="14" viewBox="0 0 14 14"><path d="M1.5 1.5 L12.5 1.5 L7 12.5 Z" fill="none" stroke="#a76a3a" stroke-width="2.2" stroke-linejoin="round"/></svg>
<div class="t" style="left:1331px;top:204px;color:#8a8a8a">Icing</div>
<svg style="left:1380px;top:202px" width="14" height="15" viewBox="0 0 14 15"><path d="M2 2 L12 2 L7 13 Z" fill="none" stroke="#1a9a80" stroke-width="1.2"/><rect x="0.5" y="0.5" width="3" height="3" fill="#282828" stroke="#1a9a80" stroke-width="1"/><rect x="10.5" y="0.5" width="3" height="3" fill="#282828" stroke="#1a9a80" stroke-width="1"/><rect x="5.5" y="11.5" width="3" height="3" fill="#282828" stroke="#1a9a80" stroke-width="1"/></svg>
<!-- closed eyes -->
<svg style="left:1451px;top:166px" width="14" height="6" viewBox="0 0 14 6"><path d="M1 1 Q7 7 13 1" fill="none" stroke="#ccc" stroke-width="1"/></svg>
<svg style="left:1451px;top:206px" width="14" height="6" viewBox="0 0 14 6"><path d="M1 1 Q7 7 13 1" fill="none" stroke="#ccc" stroke-width="1"/></svg>
<!-- render cameras -->
<svg style="left:1471px;top:142px" width="14" height="13" viewBox="0 0 14 13"><path d="M0.5 3 L4 3 L5 0.8 L9 0.8 L10 3 L13.5 3 L13.5 12.3 L0.5 12.3 Z" fill="#e6e6e6"/><circle cx="7" cy="7.3" r="3.5" fill="#2b2b2b"/><circle cx="7" cy="7.3" r="2" fill="#e6e6e6"/><circle cx="7" cy="7.3" r="1" fill="#2b2b2b"/></svg>
<svg style="left:1471px;top:162px" width="14" height="13" viewBox="0 0 14 13"><path d="M0.5 3 L4 3 L5 0.8 L9 0.8 L10 3 L13.5 3 L13.5 12.3 L0.5 12.3 Z" fill="#e6e6e6"/><circle cx="7" cy="7.3" r="3.5" fill="#282828"/><circle cx="7" cy="7.3" r="2" fill="#e6e6e6"/><circle cx="7" cy="7.3" r="1" fill="#282828"/></svg>
<svg style="left:1471px;top:182px" width="14" height="13" viewBox="0 0 14 13"><path d="M0.5 3 L4 3 L5 0.8 L9 0.8 L10 3 L13.5 3 L13.5 12.3 L0.5 12.3 Z" fill="#e6e6e6"/><circle cx="7" cy="7.3" r="3.5" fill="#334d80"/><circle cx="7" cy="7.3" r="2" fill="#e6e6e6"/><circle cx="7" cy="7.3" r="1" fill="#334d80"/></svg>
<svg style="left:1471px;top:202px" width="14" height="13" viewBox="0 0 14 13"><path d="M0.5 3 L4 3 L5 0.8 L9 0.8 L10 3 L13.5 3 L13.5 12.3 L0.5 12.3 Z" fill="#e6e6e6"/><circle cx="7" cy="7.3" r="3.5" fill="#282828"/><circle cx="7" cy="7.3" r="2" fill="#e6e6e6"/><circle cx="7" cy="7.3" r="1" fill="#282828"/></svg>
<!-- properties header -->
<div class="a" style="left:1256px;top:227px;width:31px;height:19.5px;border-radius:4px;background:#282828;border:1px solid #333"></div>
<svg style="left:1258.5px;top:229px" width="14" height="16" viewBox="0 0 14 16"><rect x="0.8" y="0.8" width="12.4" height="6" rx="3" fill="#e6e6e6"/><rect x="7.5" y="2.3" width="4.5" height="3" fill="#282828"/><rect x="0.8" y="9" width="12.4" height="6" rx="3" fill="#e6e6e6"/><rect x="9.5" y="10.5" width="2.5" height="3" fill="#282828"/></svg>
<svg style="left:1276px;top:234.5px" width="8" height="6" viewBox="0 0 8 6"><path d="M1 1.3 L4 4.3 L7 1.3" stroke="#d9d9d9" stroke-width="1.2" fill="none"/></svg>
<div class="a" style="left:1315px;top:227px;width:116px;height:19.5px;border-radius:4px;background:#1d1d1d;border:1px solid #333"></div>
<svg style="left:1319px;top:229.5px" width="14" height="14" viewBox="0 0 14 14"><circle cx="8.5" cy="5.5" r="4.2" fill="none" stroke="#d9d9d9" stroke-width="1.2"/><path d="M5.5 8.5 L1 13" stroke="#d9d9d9" stroke-width="1.3"/></svg>
<div class="a" style="left:1468.5px;top:227px;width:20px;height:19.5px;border-radius:4px;background:#282828;border:1px solid #333"></div>
<svg style="left:1474.5px;top:234px" width="8" height="6" viewBox="0 0 8 6"><path d="M1 1.3 L4 4.3 L7 1.3" stroke="#d9d9d9" stroke-width="1.2" fill="none"/></svg>
<!-- nav icons -->
<div class="a" style="left:1250px;top:407px;width:26px;height:26px;border-radius:4px 0 0 4px;background:#303030"></div>
<div class="a" style="left:1252px;top:473px;width:22px;height:1px;background:#2b2b2b"></div>
<div class="a" style="left:1252px;top:677px;width:22px;height:1px;background:#2b2b2b"></div>
<svg style="left:1255px;top:264px" width="15" height="15" viewBox="0 0 15 15"><path d="M3.5 1 L3.5 7 M2 7 L5 7 L5 13 Q3.5 14.5 2 13 Z" stroke="#d9d9d9" stroke-width="1.3" fill="#d9d9d9"/><path d="M10.5 14 L10.5 6.5 M8 1 L8 4.5 Q10.5 7.5 13 4.5 L13 1" stroke="#d9d9d9" stroke-width="2" fill="none"/></svg>
<svg style="left:1255px;top:298.5px" width="15" height="15" viewBox="0 0 15 15"><rect x="1" y="4" width="13" height="9.5" rx="1" fill="none" stroke="#d9d9d9" stroke-width="1.3"/><path d="M4 4 L7.5 1 L11 4" stroke="#d9d9d9" stroke-width="1.2" fill="none"/><rect x="10.5" y="6" width="2" height="5" fill="#d9d9d9"/></svg>
<svg style="left:1255px;top:327px" width="15" height="15" viewBox="0 0 15 15"><rect x="1" y="1" width="13" height="5" fill="#d9d9d9"/><rect x="3" y="7" width="9" height="7" fill="none" stroke="#d9d9d9" stroke-width="1.3"/><path d="M4.5 13 L7 9.5 L9 12 L10.5 10.5 L11 13 Z" fill="#d9d9d9"/></svg>
<svg style="left:1255px;top:355.5px" width="15" height="15" viewBox="0 0 15 15"><path d="M1 4.5 L1 14 L10.5 14" stroke="#bbb" stroke-width="1" fill="none"/><path d="M2.7 3 L2.7 12.3 L12 12.3" stroke="#ccc" stroke-width="1" fill="none"/><rect x="4.5" y="1" width="9.5" height="9.5" fill="#d9d9d9"/><path d="M5.5 9.5 L8.5 5 L10.5 8 L11.5 7 L13 9.5 Z" fill="#1f1f1f"/></svg>
<svg style="left:1255px;top:384px" width="15" height="15" viewBox="0 0 15 15"><path d="M4.5 1.5 L1 9.5 Q1.5 11 4 11 L6 11 Q6 8 8 7 Z" fill="#d9d9d9"/><circle cx="10.5" cy="2.7" r="1.7" fill="#d9d9d9"/><circle cx="9.5" cy="10.3" r="3.5" fill="#1f1f1f" stroke="#d9d9d9" stroke-width="1.2"/></svg>
<svg style="left:1255px;top:412px" width="15" height="15" viewBox="0 0 15 15"><circle cx="7.5" cy="7.5" r="5.3" fill="none" stroke="#e25a6a" stroke-width="1.3"/><path d="M4.2 4.5 Q6.5 3.5 7.5 5 Q8 6.5 6.5 7.5 Q5.5 8.5 6 10 Q4 9.5 3.5 7.5 Q3.3 5.8 4.2 4.5 Z M9 8.5 Q10.5 8 11.5 9.5 Q10.8 11.5 9 12 Q8.2 10.5 9 8.5 Z" fill="#e25a6a"/><path d="M0.8 14.2 L3 12 M12 3 L14.2 0.8" stroke="#e25a6a" stroke-width="1.3"/></svg>
<svg style="left:1255px;top:448px" width="15" height="15" viewBox="0 0 15 15"><rect x="0.5" y="1" width="14" height="3.5" fill="#d9d9d9"/><rect x="1.5" y="5" width="12" height="9" fill="none" stroke="#d9d9d9" stroke-width="1.3"/><rect x="5.5" y="7" width="4" height="1.5" fill="#d9d9d9"/></svg>
<svg style="left:1255px;top:483.5px" width="15" height="15" viewBox="0 0 15 15"><path d="M1 4 L1 1 L4 1 M11 1 L14 1 L14 4 M14 11 L14 14 L11 14 M4 14 L1 14 L1 11" stroke="#d88a3a" stroke-width="1.2" fill="none"/><rect x="3.5" y="3.5" width="8" height="8" fill="#e69a45"/></svg>
<svg style="left:1255px;top:511.5px" width="15" height="15" viewBox="0 0 15 15"><path d="M13.5 3 Q14 6.5 11 7.5 Q9.5 8 8.5 7.5 L3 13 Q1.8 14.2 0.8 13.2 Q-0.2 12.2 1 11 L6.5 5.5 Q6 3.5 7.5 2 Q9.5 0.2 12 1 L9.5 3.5 L10 5 L11.5 5.5 Z" fill="#5a8fe0"/></svg>
<svg style="left:1255px;top:539.5px" width="15" height="15" viewBox="0 0 15 15"><circle cx="3" cy="3" r="2.2" fill="#5a8fe0"/><circle cx="13" cy="3" r="1.5" fill="#5a8fe0"/><circle cx="3" cy="13" r="1.5" fill="#5a8fe0"/><circle cx="12.5" cy="12.5" r="2" fill="#5a8fe0"/><path d="M3 3 L13 3 M3 3 L3 13 M3 3 L12.5 12.5" stroke="#5a8fe0" stroke-width="1.2"/></svg>
<svg style="left:1255px;top:567.5px" width="15" height="15" viewBox="0 0 15 15"><circle cx="7" cy="8" r="3" fill="#5a8fe0"/><path d="M12.5 9.5 A6 6 0 1 1 6 2.2" fill="none" stroke="#5a8fe0" stroke-width="1.3"/><circle cx="12" cy="3" r="2" fill="#5a8fe0"/></svg>
<svg style="left:1255px;top:595.5px" width="15" height="15" viewBox="0 0 15 15"><path d="M2 12 Q0 9 2.5 6 L8 1.5 Q11 -0.5 13 2 Q15 4.5 12.5 7 L7.5 12.5 Q4.5 14.5 2 12 Z" fill="none" stroke="#5a8fe0" stroke-width="1.3"/><circle cx="5.5" cy="9.5" r="2.5" fill="none" stroke="#5a8fe0" stroke-width="1.3"/><circle cx="5.5" cy="9.5" r="1" fill="#5a8fe0"/><circle cx="11" cy="3.5" r="1.2" fill="#5a8fe0"/></svg>
<svg style="left:1255px;top:623.5px" width="15" height="15" viewBox="0 0 15 15"><path d="M2.5 2.5 L12.5 2.5 L7.5 12.5 Z" fill="none" stroke="#22c0a0" stroke-width="1.2"/><rect x="1" y="1" width="3" height="3" fill="#1f1f1f" stroke="#22c0a0" stroke-width="1"/><rect x="11" y="1" width="3" height="3" fill="#1f1f1f" stroke="#22c0a0" stroke-width="1"/><rect x="6" y="11" width="3" height="3" fill="#1f1f1f" stroke="#22c0a0" stroke-width="1"/></svg>
<svg style="left:1255px;top:652px" width="15" height="15" viewBox="0 0 15 15"><circle cx="7.5" cy="7.5" r="6.5" fill="#d65c5c"/><path d="M7.5 1 L7.5 7.5 L14 7.5 A6.5 6.5 0 0 0 7.5 1 Z" fill="#1f1f1f"/><path d="M7.5 7.5 L2.5 11.5 A6.5 6.5 0 0 0 7.5 14 Z" fill="#f0e0e0"/></svg>
<svg style="left:1255px;top:687.5px" width="15" height="15" viewBox="0 0 15 15"><rect x="1" y="1" width="13" height="13" fill="#d65c5c"/><path d="M1 1 h3 v3 h-3 z M7 1 h3 v3 h-3 z M4 4 h3 v3 h-3 z M10 4 h3 v3 h-3 z M1 7 h3 v3 h-3 z M7 7 h3 v3 h-3 z M4 10 h3 v3 h-3 z M10 10 h3 v3 h-3 z" fill="#1f1f1f"/></svg>

<!-- breadcrumb -->
<svg style="left:1286.5px;top:259.5px" width="15" height="15" viewBox="0 0 15 15"><path d="M4.5 1.5 L1 9.5 Q1.5 11 4 11 L6 11 Q6 8 8 7 Z" fill="#e6e6e6"/><circle cx="10.5" cy="2.7" r="1.7" fill="#e6e6e6"/><circle cx="9.5" cy="10.3" r="3.5" fill="#303030" stroke="#e6e6e6" stroke-width="1.2"/></svg>
<div class="t" style="left:1310px;top:261px;color:#dadada">Scene</div>
<svg style="left:1358px;top:262px" width="7" height="10" viewBox="0 0 7 10"><path d="M1.5 1 L5.5 5 L1.5 9" stroke="#d9d9d9" stroke-width="1.2" fill="none"/></svg>
<svg style="left:1373.5px;top:259.5px" width="15" height="15" viewBox="0 0 15 15"><circle cx="7.5" cy="7.5" r="5.3" fill="none" stroke="#e6e6e6" stroke-width="1.3"/><path d="M4.2 4.5 Q6.5 3.5 7.5 5 Q8 6.5 6.5 7.5 Q5.5 8.5 6 10 Q4 9.5 3.5 7.5 Q3.3 5.8 4.2 4.5 Z M9 8.5 Q10.5 8 11.5 9.5 Q10.8 11.5 9 12 Q8.2 10.5 9 8.5 Z" fill="#e6e6e6"/><path d="M0.8 14.2 L3 12 M12 3 L14.2 0.8" stroke="#e6e6e6" stroke-width="1.3"/></svg>
<div class="t" style="left:1397px;top:261px;color:#dadada">World</div>
<svg style="left:1470px;top:259px" width="16" height="16" viewBox="0 0 16 16"><path d="M9 1.5 L14.5 7 L12.5 7.5 L10 10 L9.5 13 L3 6.5 L6 6 L8.5 3.5 Z" fill="none" stroke="#999" stroke-width="1.1"/><path d="M5.5 10.5 L1.5 14.5" stroke="#999" stroke-width="1.1"/></svg>
<!-- world ID -->
<div class="a" style="left:1284.5px;top:294px;width:203px;height:18.5px;border-radius:4px;background:#282828;overflow:hidden">
  <div class="a" style="left:31px;top:0;width:111px;height:18.5px;background:#1d1d1d"></div>
  <div class="a" style="left:142.5px;top:0;width:19px;height:18.5px;background:#4e4e4e"></div>
  <div class="a" style="left:162.5px;top:0;width:19.5px;height:18.5px;background:#4e4e4e"></div>
  <div class="a" style="left:183px;top:0;width:20px;height:18.5px;background:#4e4e4e"></div>
</div>
<svg style="left:1288px;top:296px" width="15" height="15" viewBox="0 0 15 15"><circle cx="7.5" cy="7.5" r="5.3" fill="none" stroke="#e6e6e6" stroke-width="1.3"/><path d="M4.2 4.5 Q6.5 3.5 7.5 5 Q8 6.5 6.5 7.5 Q5.5 8.5 6 10 Q4 9.5 3.5 7.5 Q3.3 5.8 4.2 4.5 Z M9 8.5 Q10.5 8 11.5 9.5 Q10.8 11.5 9 12 Q8.2 10.5 9 8.5 Z" fill="#e6e6e6"/><path d="M0.8 14.2 L3 12 M12 3 L14.2 0.8" stroke="#e6e6e6" stroke-width="1.3"/></svg>
<svg style="left:1304px;top:300.5px" width="8" height="6" viewBox="0 0 8 6"><path d="M1 1.3 L4 4.3 L7 1.3" stroke="#d9d9d9" stroke-width="1.2" fill="none"/></svg>
<div class="t" style="left:1322px;top:297px;color:#dedede">World</div>
<svg style="left:1430.5px;top:296px" width="14" height="15" viewBox="0 0 14 15"><path d="M7 1 L12.5 3 Q13 10 7 14 Q1 10 1.5 3 Z" fill="none" stroke="#aaa" stroke-width="1.1"/></svg>
<svg style="left:1450px;top:296px" width="15" height="15" viewBox="0 0 15 15"><path d="M4.5 4 L4.5 1 L10 1 L13.5 4.5 L13.5 10.5 L10.5 10.5" stroke="#d9d9d9" stroke-width="1.2" fill="none"/><path d="M10 1 L13.5 4.5 L10 4.5 Z" fill="#d9d9d9"/><path d="M1.5 4.5 L1.5 14 L10.5 14 L10.5 10.5 M1.5 4.5 L4.5 4.5 M4.5 4.5 L4.5 10.5 L10.5 10.5" stroke="#d9d9d9" stroke-width="1.2" fill="none"/></svg>
<svg style="left:1472px;top:298.5px" width="11" height="11" viewBox="0 0 11 11"><path d="M1 1 L10 10 M10 1 L1 10" stroke="#e6e6e6" stroke-width="1.3"/></svg>
<!-- panels -->
<div class="a" style="left:1284.5px;top:323.5px;width:203.5px;height:25px;border-radius:4px;background:#3a3a3a"></div>
<div class="a" style="left:1284.5px;top:351px;width:203.5px;height:121px;border-radius:4px;background:#3a3a3a"></div>
<div class="a" style="left:1284.5px;top:475px;width:203.5px;height:24.5px;border-radius:4px;background:#3a3a3a"></div>
<div class="a" style="left:1284.5px;top:502px;width:203.5px;height:24.5px;border-radius:4px;background:#3a3a3a"></div>
<div class="a" style="left:1284.5px;top:529px;width:203.5px;height:24.5px;border-radius:4px;background:#3a3a3a"></div>
<div class="a" style="left:1284.5px;top:556px;width:203.5px;height:24.5px;border-radius:4px;background:#3a3a3a"></div>
<div class="a" style="left:1284.5px;top:583px;width:203.5px;height:24.5px;border-radius:4px;background:#3a3a3a"></div>
<svg style="left:1294px;top:331px" width="7" height="10" viewBox="0 0 7 10"><path d="M1.5 1 L5.5 5 L1.5 9" stroke="#c8c8c8" stroke-width="1.1" fill="none"/></svg>
<div class="t" style="left:1306px;top:330px;color:#dadada">Preview</div>
<svg style="left:1470px;top:333.5px" width="12" height="6" viewBox="0 0 12 6"><circle cx="1" cy="1" r="0.7" fill="#6a6a6a"/><circle cx="1" cy="4" r="0.7" fill="#6a6a6a"/><circle cx="4" cy="1" r="0.7" fill="#6a6a6a"/><circle cx="4" cy="4" r="0.7" fill="#6a6a6a"/><circle cx="7" cy="1" r="0.7" fill="#6a6a6a"/><circle cx="7" cy="4" r="0.7" fill="#6a6a6a"/><circle cx="10" cy="1" r="0.7" fill="#6a6a6a"/><circle cx="10" cy="4" r="0.7" fill="#6a6a6a"/></svg>
<svg style="left:1292px;top:359.0px" width="10" height="7" viewBox="0 0 10 7"><path d="M1 1.5 L5 5.5 L9 1.5" stroke="#c8c8c8" stroke-width="1.1" fill="none"/></svg>
<div class="t" style="left:1306px;top:356.5px;color:#dadada">Surface</div>
<svg style="left:1470px;top:360.0px" width="12" height="6" viewBox="0 0 12 6"><circle cx="1" cy="1" r="0.7" fill="#6a6a6a"/><circle cx="1" cy="4" r="0.7" fill="#6a6a6a"/><circle cx="4" cy="1" r="0.7" fill="#6a6a6a"/><circle cx="4" cy="4" r="0.7" fill="#6a6a6a"/><circle cx="7" cy="1" r="0.7" fill="#6a6a6a"/><circle cx="7" cy="4" r="0.7" fill="#6a6a6a"/><circle cx="10" cy="1" r="0.7" fill="#6a6a6a"/><circle cx="10" cy="4" r="0.7" fill="#6a6a6a"/></svg>
<svg style="left:1294px;top:482px" width="7" height="10" viewBox="0 0 7 10"><path d="M1.5 1 L5.5 5 L1.5 9" stroke="#c8c8c8" stroke-width="1.1" fill="none"/></svg>
<div class="t" style="left:1306px;top:481px;color:#dadada">Volume</div>
<svg style="left:1470px;top:484.5px" width="12" height="6" viewBox="0 0 12 6"><circle cx="1" cy="1" r="0.7" fill="#6a6a6a"/><circle cx="1" cy="4" r="0.7" fill="#6a6a6a"/><circle cx="4" cy="1" r="0.7" fill="#6a6a6a"/><circle cx="4" cy="4" r="0.7" fill="#6a6a6a"/><circle cx="7" cy="1" r="0.7" fill="#6a6a6a"/><circle cx="7" cy="4" r="0.7" fill="#6a6a6a"/><circle cx="10" cy="1" r="0.7" fill="#6a6a6a"/><circle cx="10" cy="4" r="0.7" fill="#6a6a6a"/></svg>
<svg style="left:1294px;top:509px" width="7" height="10" viewBox="0 0 7 10"><path d="M1.5 1 L5.5 5 L1.5 9" stroke="#c8c8c8" stroke-width="1.1" fill="none"/></svg>
<div class="t" style="left:1306px;top:508px;color:#dadada">Ray Visibility</div>
<svg style="left:1470px;top:511.5px" width="12" height="6" viewBox="0 0 12 6"><circle cx="1" cy="1" r="0.7" fill="#6a6a6a"/><circle cx="1" cy="4" r="0.7" fill="#6a6a6a"/><circle cx="4" cy="1" r="0.7" fill="#6a6a6a"/><circle cx="4" cy="4" r="0.7" fill="#6a6a6a"/><circle cx="7" cy="1" r="0.7" fill="#6a6a6a"/><circle cx="7" cy="4" r="0.7" fill="#6a6a6a"/><circle cx="10" cy="1" r="0.7" fill="#6a6a6a"/><circle cx="10" cy="4" r="0.7" fill="#6a6a6a"/></svg>
<svg style="left:1294px;top:536px" width="7" height="10" viewBox="0 0 7 10"><path d="M1.5 1 L5.5 5 L1.5 9" stroke="#c8c8c8" stroke-width="1.1" fill="none"/></svg>
<div class="t" style="left:1306px;top:535px;color:#dadada">Settings</div>
<svg style="left:1470px;top:538.5px" width="12" height="6" viewBox="0 0 12 6"><circle cx="1" cy="1" r="0.7" fill="#6a6a6a"/><circle cx="1" cy="4" r="0.7" fill="#6a6a6a"/><circle cx="4" cy="1" r="0.7" fill="#6a6a6a"/><circle cx="4" cy="4" r="0.7" fill="#6a6a6a"/><circle cx="7" cy="1" r="0.7" fill="#6a6a6a"/><circle cx="7" cy="4" r="0.7" fill="#6a6a6a"/><circle cx="10" cy="1" r="0.7" fill="#6a6a6a"/><circle cx="10" cy="4" r="0.7" fill="#6a6a6a"/></svg>
<svg style="left:1294px;top:563px" width="7" height="10" viewBox="0 0 7 10"><path d="M1.5 1 L5.5 5 L1.5 9" stroke="#c8c8c8" stroke-width="1.1" fill="none"/></svg>
<div class="t" style="left:1306px;top:562px;color:#dadada">Viewport Display</div>
<svg style="left:1470px;top:565.5px" width="12" height="6" viewBox="0 0 12 6"><circle cx="1" cy="1" r="0.7" fill="#6a6a6a"/><circle cx="1" cy="4" r="0.7" fill="#6a6a6a"/><circle cx="4" cy="1" r="0.7" fill="#6a6a6a"/><circle cx="4" cy="4" r="0.7" fill="#6a6a6a"/><circle cx="7" cy="1" r="0.7" fill="#6a6a6a"/><circle cx="7" cy="4" r="0.7" fill="#6a6a6a"/><circle cx="10" cy="1" r="0.7" fill="#6a6a6a"/><circle cx="10" cy="4" r="0.7" fill="#6a6a6a"/></svg>
<svg style="left:1294px;top:590px" width="7" height="10" viewBox="0 0 7 10"><path d="M1.5 1 L5.5 5 L1.5 9" stroke="#c8c8c8" stroke-width="1.1" fill="none"/></svg>
<div class="t" style="left:1306px;top:589px;color:#dadada">Custom Properties</div>
<svg style="left:1470px;top:592.5px" width="12" height="6" viewBox="0 0 12 6"><circle cx="1" cy="1" r="0.7" fill="#6a6a6a"/><circle cx="1" cy="4" r="0.7" fill="#6a6a6a"/><circle cx="4" cy="1" r="0.7" fill="#6a6a6a"/><circle cx="4" cy="4" r="0.7" fill="#6a6a6a"/><circle cx="7" cy="1" r="0.7" fill="#6a6a6a"/><circle cx="7" cy="4" r="0.7" fill="#6a6a6a"/><circle cx="10" cy="1" r="0.7" fill="#6a6a6a"/><circle cx="10" cy="4" r="0.7" fill="#6a6a6a"/></svg>
<!-- surface contents -->
<div class="t" style="right:198px;top:387px;color:#d0d0d0">Surface</div>
<div class="a" style="left:1365px;top:384.5px;width:94px;height:18px;border-radius:4px;background:#282828"></div>
<div class="a" style="left:1370.5px;top:390px;width:7px;height:7px;border-radius:50%;background:#63c763"></div>
<div class="t" style="left:1385px;top:387px;color:#dedede">Background</div>
<div class="t" style="right:198px;top:423px;color:#d0d0d0">Color</div>
<div class="a" style="left:1365px;top:420.5px;width:94px;height:18px;border-radius:4px;background:#282828;overflow:hidden"><div class="a" style="left:18px;top:0;width:76px;height:18px;background:#3a3a3a;border-radius:0 4px 4px 0"></div></div>
<div class="a" style="left:1370.5px;top:426px;width:7px;height:7px;border-radius:50%;background:#c7c729"></div>
<div class="a" style="left:1468.5px;top:427.5px;width:4px;height:4px;border-radius:50%;background:#e6e6e6"></div>
<div class="t" style="right:198px;top:448px;color:#d0d0d0">Strength</div>
<div class="a" style="left:1365px;top:445.5px;width:94px;height:18px;border-radius:4px;background:#282828;overflow:hidden"><div class="a" style="left:19px;top:0;width:75px;height:18px;background:#545454"></div></div>
<div class="a" style="left:1370.5px;top:451px;width:7px;height:7px;border-radius:50%;background:#a0a0a0"></div>
<div class="t" style="left:1405px;top:448px;color:#dedede">1.000</div>
<div class="a" style="left:1468.5px;top:452.5px;width:4px;height:4px;border-radius:50%;background:#e6e6e6"></div>
<!-- node header -->
<div class="a" style="left:64px;top:517.5px;width:31px;height:19px;border-radius:4px;background:#282828;border:1px solid #333"></div>
<svg style="left:67px;top:519.5px" width="15" height="15" viewBox="0 0 15 15"><path d="M4.5 2.2 A6 6 0 1 0 10.5 2.2" fill="none" stroke="#d9d9d9" stroke-width="1.3"/><path d="M3.5 5.5 L6 3" stroke="#d9d9d9" stroke-width="1.5"/><rect x="7" y="1" width="1.8" height="1.8" fill="#d9d9d9"/></svg>
<svg style="left:84px;top:524px" width="8" height="6" viewBox="0 0 8 6"><path d="M1 1.3 L4 4.3 L7 1.3" stroke="#d9d9d9" stroke-width="1.2" fill="none"/></svg>
<div class="a" style="left:101px;top:517.5px;width:92px;height:19px;border-radius:4px;background:#282828;border:1px solid #333"></div>
<svg style="left:105px;top:519.5px" width="16" height="16" viewBox="0 0 16 16"><path d="M1 4.5 L1 1 L4.5 1 M11.5 1 L15 1 L15 4.5 M15 11.5 L15 15 L11.5 15 M4.5 15 L1 15 L1 11.5" stroke="#d9d9d9" stroke-width="1.2" fill="none"/><rect x="4" y="4" width="8" height="8" fill="#e6e6e6"/></svg>
<div class="t" style="left:127px;top:520.5px;color:#dadada">Object</div>
<svg style="left:181px;top:524px" width="8" height="6" viewBox="0 0 8 6"><path d="M1 1.3 L4 4.3 L7 1.3" stroke="#d9d9d9" stroke-width="1.2" fill="none"/></svg>
<div class="t" style="left:205px;top:520.5px;color:#dadada">View</div>
<div class="t" style="left:246px;top:520.5px;color:#dadada">Select</div>
<div class="t" style="left:293px;top:520.5px;color:#dadada">Add</div>
<div class="t" style="left:329px;top:520.5px;color:#dadada">Node</div>
<div class="a" style="left:370px;top:520.5px;width:12.5px;height:13px;border-radius:2px;background:#4772b3"></div>
<svg style="left:371px;top:521.5px" width="11" height="11" viewBox="0 0 11 11"><path d="M2.3 5.5 L4.5 8 L8.8 2.5" stroke="#fff" stroke-width="1.5" fill="none"/></svg>
<div class="t" style="left:386.5px;top:520.5px;color:#dedede">Use Nodes</div>
<div class="a" style="left:479px;top:517.5px;width:79px;height:19px;border-radius:4px;background:#282828;border:1px solid #333"></div>
<div class="t" style="left:486.5px;top:520.5px;color:#dadada">Slot 1</div>
<svg style="left:545.5px;top:524px" width="8" height="6" viewBox="0 0 8 6"><path d="M1 1.3 L4 4.3 L7 1.3" stroke="#d9d9d9" stroke-width="1.2" fill="none"/></svg>
<div class="a" style="left:564px;top:517.5px;width:211px;height:19px;border-radius:4px;background:#282828;overflow:hidden">
  <div class="a" style="left:32px;top:0;width:118.5px;height:19px;background:#1d1d1d"></div>
  <div class="a" style="left:151px;top:0;width:19px;height:19px;background:#4e4e4e"></div>
  <div class="a" style="left:171px;top:0;width:19.5px;height:19px;background:#4e4e4e"></div>
  <div class="a" style="left:191px;top:0;width:20px;height:19px;background:#4e4e4e"></div>
</div>
<svg style="left:568px;top:519.5px" width="15" height="15" viewBox="0 0 15 15"><circle cx="7.5" cy="7.5" r="6.5" fill="#e6e6e6"/><path d="M7.5 1 L7.5 7.5 L14 7.5 A6.5 6.5 0 0 0 7.5 1 Z" fill="#282828"/><path d="M7.5 7.5 L2.5 11.5 A6.5 6.5 0 0 0 7.5 14 Z" fill="#282828"/><circle cx="7.5" cy="7.5" r="6.5" fill="none" stroke="#e6e6e6" stroke-width="1"/></svg>
<svg style="left:585px;top:524px" width="8" height="6" viewBox="0 0 8 6"><path d="M1 1.3 L4 4.3 L7 1.3" stroke="#d9d9d9" stroke-width="1.2" fill="none"/></svg>
<div class="t" style="left:602px;top:520.5px;color:#dedede">Material.002</div>
<svg style="left:718px;top:519.5px" width="14" height="15" viewBox="0 0 14 15"><path d="M7 1 L12.5 3 Q13 10 7 14 Q1 10 1.5 3 Z" fill="none" stroke="#aaa" stroke-width="1.1"/></svg>
<svg style="left:738px;top:519.5px" width="15" height="15" viewBox="0 0 15 15"><path d="M4.5 4 L4.5 1 L10 1 L13.5 4.5 L13.5 10.5 L10.5 10.5" stroke="#d9d9d9" stroke-width="1.2" fill="none"/><path d="M10 1 L13.5 4.5 L10 4.5 Z" fill="#d9d9d9"/><path d="M1.5 4.5 L1.5 14 L10.5 14 L10.5 10.5 M1.5 4.5 L4.5 4.5 M4.5 4.5 L4.5 10.5 L10.5 10.5" stroke="#d9d9d9" stroke-width="1.2" fill="none"/></svg>
<svg style="left:760px;top:522px" width="11" height="11" viewBox="0 0 11 11"><path d="M1 1 L10 10 M10 1 L1 10" stroke="#e6e6e6" stroke-width="1.3"/></svg>
<svg style="left:783px;top:519px" width="16" height="16" viewBox="0 0 16 16"><path d="M9 1.5 L14.5 7 L12.5 7.5 L10 10 L9.5 13 L3 6.5 L6 6 L8.5 3.5 Z" fill="none" stroke="#bbb" stroke-width="1.1"/><path d="M5.5 10.5 L1.5 14.5" stroke="#bbb" stroke-width="1.1"/></svg>
<!-- right header -->
<div class="a" style="left:1115.5px;top:518px;width:19px;height:19px;border-radius:4px;background:#262626"></div>
<svg style="left:1117px;top:519.5px" width="15" height="15" viewBox="0 0 15 15"><path d="M5 3.5 L5 13.5 L13 13.5 M2.5 6 L5 3 L7.5 6" stroke="#555" stroke-width="1.1" fill="none"/></svg>
<div class="a" style="left:1140.5px;top:518px;width:51px;height:19px;border-radius:4px;background:#282828;overflow:hidden;border:1px solid #333"><div class="a" style="left:0;top:0;width:19px;height:17px;background:#545454"></div></div>
<svg style="left:1142px;top:520px" width="15" height="15" viewBox="0 0 15 15"><path d="M2.5 10 L7 5.5 A2.12 2.12 0 0 1 10 8.5 L5.5 13" fill="none" stroke="#c0c0c0" stroke-width="4.4"/><path d="M2.5 10 L7 5.5 A2.12 2.12 0 0 1 10 8.5 L5.5 13" fill="none" stroke="#545454" stroke-width="2.2"/><path d="M1.5 9 L3.5 11 M4.5 12 L6.5 14" stroke="#545454" stroke-width="1.2"/></svg>
<svg style="left:1163px;top:520px" width="15" height="15" viewBox="0 0 15 15"><rect x="1" y="1" width="4.5" height="4.5" fill="#e6e6e6"/><path d="M9 1 L9 14 M13 1 L13 14 M1 9 L14 9 M1 13 L14 13 M5 9 L5 14" stroke="#d9d9d9" stroke-width="1.1"/></svg>
<svg style="left:1180px;top:524.5px" width="8" height="6" viewBox="0 0 8 6"><path d="M1 1.3 L4 4.3 L7 1.3" stroke="#d9d9d9" stroke-width="1.2" fill="none"/></svg>
<div class="a" style="left:1197.5px;top:518px;width:39px;height:19px;border-radius:4px;background:#282828;overflow:hidden;border:1px solid #333"><div class="a" style="left:0;top:0;width:19px;height:17px;background:#4772b3"></div></div>
<svg style="left:1199.5px;top:520px" width="15" height="15" viewBox="0 0 15 15"><path d="M6 4 A5 5 0 1 0 11.5 10" fill="none" stroke="#fff" stroke-width="1.1"/><circle cx="9" cy="6" r="4.8" fill="#fff"/><path d="M7 8 L10 5" stroke="#4772b3" stroke-width="1"/></svg>
<svg style="left:1222px;top:524.5px" width="8" height="6" viewBox="0 0 8 6"><path d="M1 1.3 L4 4.3 L7 1.3" stroke="#d9d9d9" stroke-width="1.2" fill="none"/></svg>
<svg style="left:1237px;top:555px" width="8" height="11" viewBox="0 0 8 11"><path d="M6 1 L2 5.5 L6 10" stroke="#bbb" stroke-width="1.2" fill="none"/></svg>
<!-- breadcrumb -->
<svg style="left:55px;top:556.5px" width="7" height="10" viewBox="0 0 7 10"><path d="M1.5 1 L5.5 5 L1.5 9" stroke="#999" stroke-width="1.1" fill="none"/></svg>
<svg style="left:75px;top:554px" width="14" height="14" viewBox="0 0 14 14"><path d="M0.8 3.5 L0.8 0.8 L3.5 0.8 M10.5 0.8 L13.2 0.8 L13.2 3.5 M13.2 10.5 L13.2 13.2 L10.5 13.2 M3.5 13.2 L0.8 13.2 L0.8 10.5" stroke="#d9d9d9" stroke-width="1.1" fill="none"/><rect x="3.5" y="3.5" width="7" height="7" fill="#e6e6e6"/></svg>
<div class="t" style="left:98px;top:555px;color:#dadada">Donut</div>
<svg style="left:145.5px;top:556.5px" width="7" height="10" viewBox="0 0 7 10"><path d="M1.5 1 L5.5 5 L1.5 9" stroke="#d9d9d9" stroke-width="1.1" fill="none"/></svg>
<svg style="left:161px;top:553.5px" width="15" height="15" viewBox="0 0 15 15"><path d="M2.5 2.5 L12.5 2.5 L7.5 12.5 Z" fill="none" stroke="#d9d9d9" stroke-width="1.1"/><rect x="1" y="1" width="3" height="3" fill="#1d1d1d" stroke="#d9d9d9" stroke-width="1"/><rect x="11" y="1" width="3" height="3" fill="#1d1d1d" stroke="#d9d9d9" stroke-width="1"/><rect x="6" y="11" width="3" height="3" fill="#1d1d1d" stroke="#d9d9d9" stroke-width="1"/></svg>
<div class="t" style="left:184.5px;top:555px;color:#dadada">Donut Torus</div>
<svg style="left:263.5px;top:556.5px" width="7" height="10" viewBox="0 0 7 10"><path d="M1.5 1 L5.5 5 L1.5 9" stroke="#d9d9d9" stroke-width="1.1" fill="none"/></svg>
<svg style="left:279px;top:553.5px" width="15" height="15" viewBox="0 0 15 15"><circle cx="7.5" cy="7.5" r="6.5" fill="#e6e6e6"/><path d="M7.5 1 L7.5 7.5 L14 7.5 A6.5 6.5 0 0 0 7.5 1 Z" fill="#1d1d1d"/><path d="M7.5 7.5 L2.5 11.5 A6.5 6.5 0 0 0 7.5 14 Z" fill="#1d1d1d"/><circle cx="7.5" cy="7.5" r="6.5" fill="none" stroke="#e6e6e6" stroke-width="1"/></svg>
<div class="t" style="left:303px;top:555px;color:#dadada">Material.002</div>
<div class="a" style="left:546px;top:540px;width:246px;height:292px;overflow:hidden">
<div class="a" style="left:1px;top:-10px;width:244px;height:400px;background:#303030"></div>
<div class="a" style="left:0px;top:-10px;width:2px;height:400px;background:#c85f1c"></div>
<div class="a" style="left:243.5px;top:-10px;width:2px;height:400px;background:#c85f1c"></div>
<div class="a" style="left:11.5px;top:-13.399999999999977px;width:222px;height:18px;border-radius:4px;background:#545454"></div>
<div class="a" style="left:11.5px;top:9px;width:222px;height:18.5px;border-radius:4px;background:#282828;border:1px solid #3a3a3a"></div>
<div class="t" style="left:18.5px;top:12px;color:#dedede">Subsurface Radius</div>
<svg style="left:223px;top:16.5px" width="8" height="6" viewBox="0 0 8 6"><path d="M1 1.3 L4 4.3 L7 1.3" stroke="#d9d9d9" stroke-width="1.2" fill="none"/></svg>
<div class="t" style="left:11px;top:34.5px;color:#dedede">Subsurface Co...</div>
<div class="a" style="left:106px;top:31.5px;width:128px;height:18.5px;border-radius:4px;background:#e6e6e6"></div>
<div class="a" style="left:11.5px;top:54.00px;width:222px;height:18px;border-radius:4px;background:#545454;overflow:hidden"><div class="a" style="left:0;top:0;width:29.0px;height:18px;background:#4772b3"></div></div>
<div class="t" style="left:20.5px;top:57.00px;color:#dedede">Subsurface IOR</div>
<div class="t" style="right:21px;top:57.00px;color:#dedede">1.400</div>
<div class="a" style="left:11.5px;top:76.35px;width:222px;height:18px;border-radius:4px;background:#545454;overflow:hidden"></div>
<div class="t" style="left:20.5px;top:79.35px;color:#dedede">Subsurface Anisotropy</div>
<div class="t" style="right:21px;top:79.35px;color:#dedede">0.000</div>
<div class="a" style="left:11.5px;top:98.70px;width:222px;height:18px;border-radius:4px;background:#545454;overflow:hidden"></div>
<div class="t" style="left:20.5px;top:101.70px;color:#dedede">Metallic</div>
<div class="t" style="right:21px;top:101.70px;color:#dedede">0.000</div>
<div class="a" style="left:11.5px;top:121.05px;width:222px;height:18px;border-radius:4px;background:#545454;overflow:hidden"><div class="a" style="left:0;top:0;width:110.0px;height:18px;background:#4772b3"></div></div>
<div class="t" style="left:20.5px;top:124.05px;color:#dedede">Specular</div>
<div class="t" style="right:21px;top:124.05px;color:#dedede">0.500</div>
<div class="a" style="left:11.5px;top:143.40px;width:222px;height:18px;border-radius:4px;background:#545454;overflow:hidden"></div>
<div class="t" style="left:20.5px;top:146.40px;color:#dedede">Specular Tint</div>
<div class="t" style="right:21px;top:146.40px;color:#dedede">0.000</div>
<div class="a" style="left:11.5px;top:165.75px;width:222px;height:18px;border-radius:4px;background:#545454;overflow:hidden"><div class="a" style="left:0;top:0;width:184.5px;height:18px;background:#4772b3"></div></div>
<div class="t" style="left:20.5px;top:168.75px;color:#dedede">Roughness</div>
<div class="t" style="right:21px;top:168.75px;color:#dedede">0.833</div>
<div class="a" style="left:11.5px;top:188.10px;width:222px;height:18px;border-radius:4px;background:#545454;overflow:hidden"></div>
<div class="t" style="left:20.5px;top:191.10px;color:#dedede">Anisotropic</div>
<div class="t" style="right:21px;top:191.10px;color:#dedede">0.000</div>
<div class="a" style="left:11.5px;top:210.45px;width:222px;height:18px;border-radius:4px;background:#545454;overflow:hidden"></div>
<div class="t" style="left:20.5px;top:213.45px;color:#dedede">Anisotropic Rotation</div>
<div class="t" style="right:21px;top:213.45px;color:#dedede">0.000</div>
<div class="a" style="left:11.5px;top:232.80px;width:222px;height:18px;border-radius:4px;background:#545454;overflow:hidden"></div>
<div class="t" style="left:20.5px;top:235.80px;color:#dedede">Sheen</div>
<div class="t" style="right:21px;top:235.80px;color:#dedede">0.000</div>
<div class="a" style="left:11.5px;top:255.15px;width:222px;height:18px;border-radius:4px;background:#545454;overflow:hidden"><div class="a" style="left:0;top:0;width:110.4px;height:18px;background:#4772b3"></div></div>
<div class="t" style="left:20.5px;top:258.15px;color:#dedede">Sheen Tint</div>
<div class="t" style="right:21px;top:258.15px;color:#dedede">0.500</div>
<div class="a" style="left:11.5px;top:277.50px;width:222px;height:18px;border-radius:4px;background:#545454;overflow:hidden"></div>
<div class="t" style="left:20.5px;top:280.50px;color:#dedede">Clearcoat</div>
<div class="t" style="right:21px;top:280.50px;color:#dedede">0.000</div>
</div>
<svg style="left:530px;top:540px" width="30" height="292" viewBox="530 540 30 292">
<circle cx="546.5" cy="558.00" r="4.6" fill="#6363c7" stroke="#222" stroke-width="0.8"/>
<circle cx="546.5" cy="580.60" r="4.6" fill="#c7c729" stroke="#222" stroke-width="0.8"/>
<circle cx="546.5" cy="603.00" r="4.6" fill="#a1a1a1" stroke="#222" stroke-width="0.8"/>
<circle cx="546.5" cy="625.35" r="4.6" fill="#a1a1a1" stroke="#222" stroke-width="0.8"/>
<circle cx="546.5" cy="647.70" r="4.6" fill="#a1a1a1" stroke="#222" stroke-width="0.8"/>
<circle cx="546.5" cy="670.05" r="4.6" fill="#a1a1a1" stroke="#222" stroke-width="0.8"/>
<circle cx="546.5" cy="692.40" r="4.6" fill="#a1a1a1" stroke="#222" stroke-width="0.8"/>
<circle cx="546.5" cy="714.75" r="4.6" fill="#a1a1a1" stroke="#222" stroke-width="0.8"/>
<circle cx="546.5" cy="737.10" r="4.6" fill="#a1a1a1" stroke="#222" stroke-width="0.8"/>
<circle cx="546.5" cy="759.45" r="4.6" fill="#a1a1a1" stroke="#222" stroke-width="0.8"/>
<circle cx="546.5" cy="781.80" r="4.6" fill="#a1a1a1" stroke="#222" stroke-width="0.8"/>
<circle cx="546.5" cy="804.15" r="4.6" fill="#a1a1a1" stroke="#222" stroke-width="0.8"/>
<circle cx="546.5" cy="826.50" r="4.6" fill="#a1a1a1" stroke="#222" stroke-width="0.8"/>
</svg><svg style="left:68px;top:836px" width="12" height="15" viewBox="0 0 12 15"><path d="M6.5 1 L8 1 Q11 1 11 4.5 L11 11 Q11 14.2 8 14.2 L4 14.2 Q1 14.2 1 11 L1 8" fill="none" stroke="#9a9a9a" stroke-width="1.1"/><path d="M1 7 L1 4 Q1 0.8 3.5 0.8 L5.5 0.8 L5.5 7 Z" fill="#9a9a9a"/></svg>
<div class="t" style="left:90px;top:837px;color:#9a9a9a">Pan View</div>
<svg style="left:149px;top:836px" width="18" height="15" viewBox="0 0 18 15"><path d="M6.5 1 L8 1 Q11 1 11 4.5 L11 11 Q11 14.2 8 14.2 L4 14.2 Q1 14.2 1 11 L1 8" fill="none" stroke="#9a9a9a" stroke-width="1.1"/><path d="M1 7 L1 4 Q1 0.8 3.5 0.8 L5.5 0.8 L5.5 7 Z" fill="#9a9a9a"/><path d="M13.5 1.5 L13.5 6.5 M16 2.5 L16 5.5" stroke="#9a9a9a" stroke-width="1.1"/></svg>
<div class="t" style="left:174px;top:837px;color:#9a9a9a">Box Select</div>
<svg style="left:312px;top:836px" width="12" height="15" viewBox="0 0 12 15"><rect x="0.8" y="0.8" width="10.4" height="13.4" rx="3.3" fill="none" stroke="#9a9a9a" stroke-width="1.1"/><rect x="5" y="3" width="2" height="4.5" rx="0.8" fill="#9a9a9a"/></svg>
<div class="t" style="left:334.5px;top:837px;color:#9a9a9a">Dolly View</div>
<svg style="left:555px;top:836px" width="18" height="15" viewBox="0 0 18 15"><path d="M5.5 1 L4 1 Q1 1 1 4.5 L1 11 Q1 14.2 4 14.2 L8 14.2 Q11 14.2 11 11 L11 8" fill="none" stroke="#9a9a9a" stroke-width="1.1"/><path d="M11 7 L11 4 Q11 0.8 8.5 0.8 L6.5 0.8 L6.5 7 Z" fill="#9a9a9a"/><path d="M13.5 1.5 L13.5 6.5 M16 2.5 L16 5.5" stroke="#9a9a9a" stroke-width="1.1"/></svg>
<div class="t" style="left:579px;top:837px;color:#9a9a9a">Lasso Select</div>
<div class="t" style="left:1459px;top:837px;color:#9a9a9a">3.0.0</div>

</div></div>
</body></html>
